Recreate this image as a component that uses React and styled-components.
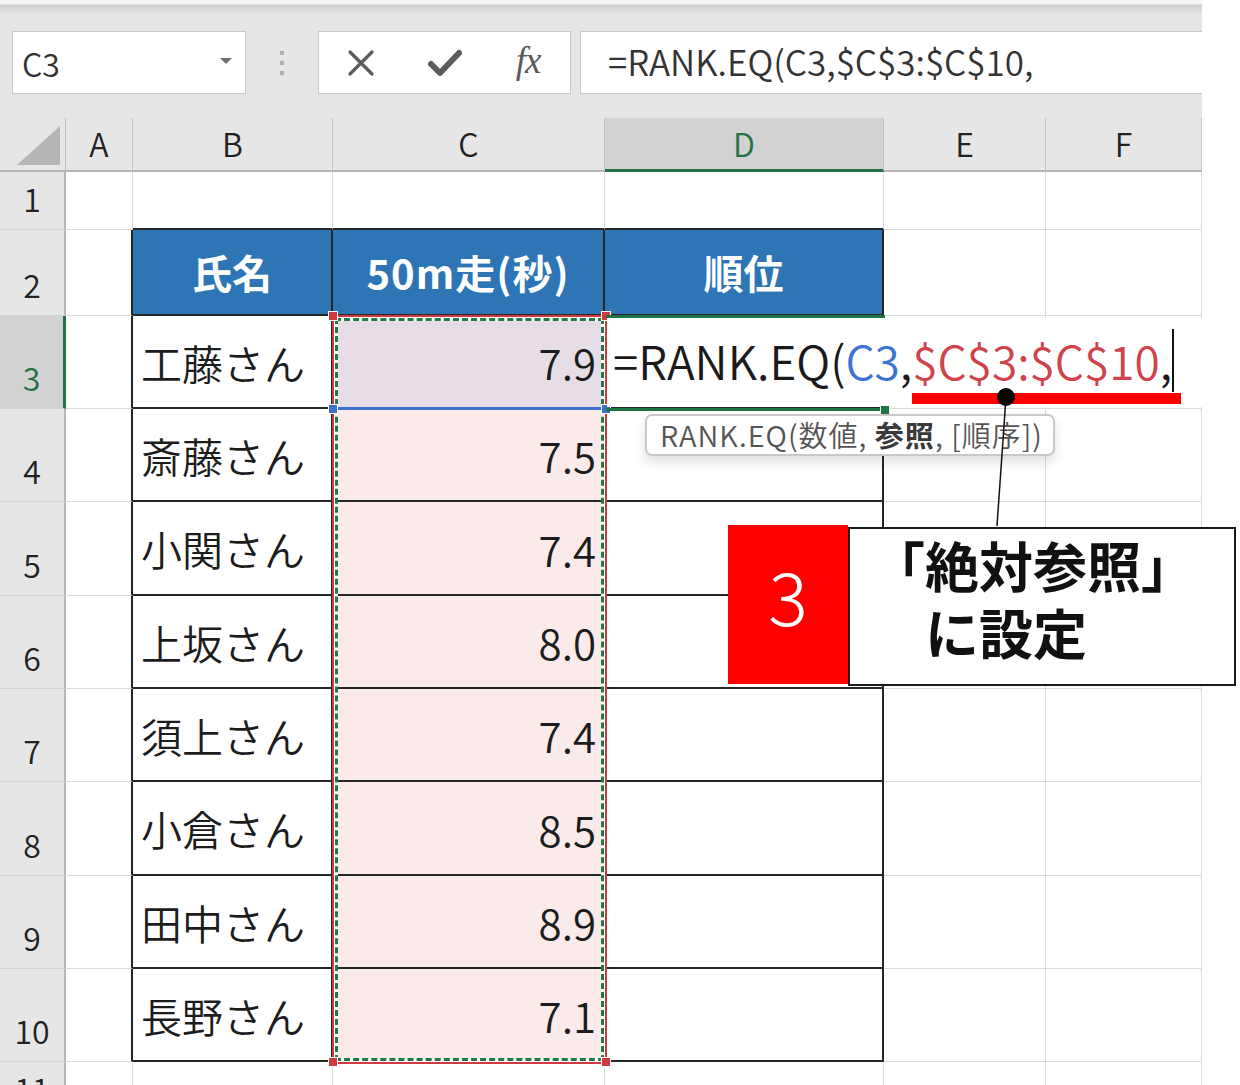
import React from 'react';
import styled, { createGlobalStyle } from 'styled-components';

const Global = createGlobalStyle`
  html, body { margin: 0; padding: 0; background: #fff; }
  body { font-family: "Noto Sans CJK JP", "Noto Sans", sans-serif; }
`;

const GREEN = '#217346';
const BLACK_LINE = '2px solid #262626';
const GRID_LINE = '1px solid #dadada';

const Root = styled.div`
  position: relative;
  width: 1240px;
  height: 1085px;
  overflow: hidden;
  background: #fff;
`;

const Frame = styled.div`
  width: 1202px;
`;

const Toolbar = styled.div`
  height: 118px;
  box-sizing: border-box;
  display: flex;
  align-items: flex-start;
  padding: 31px 0 0 12px;
  background: linear-gradient(#f6f6f6 0, #f6f6f6 4px, #cfcfcf 5px, #e3e3e3 13px, #e6e6e6 18px, #e6e6e6 100%);
`;

const NameBox = styled.div`
  width: 234px;
  height: 63px;
  box-sizing: border-box;
  background: #fff;
  border: 1px solid #c9c9c9;
  display: flex;
  align-items: center;
  justify-content: space-between;
  padding: 0 13px 0 9px;
  font-size: 32px;
  font-weight: 350;
  color: #333;
`;

const Caret = styled.span`
  width: 0;
  height: 0;
  border-left: 6px solid transparent;
  border-right: 6px solid transparent;
  border-top: 6px solid #707070;
  margin-bottom: 4px;
`;

const Grip = styled.div`
  width: 72px;
  height: 63px;
  display: flex;
  flex-direction: column;
  align-items: center;
  justify-content: center;
  gap: 6px;
`;

const GripDot = styled.span`
  width: 4px;
  height: 4px;
  background: #b0b0b0;
`;

const Buttons = styled.div`
  width: 253px;
  height: 63px;
  box-sizing: border-box;
  background: #fff;
  border: 1px solid #c9c9c9;
  display: flex;
  align-items: center;
`;

const IconSlot = styled.div`
  width: 84px;
  height: 100%;
  display: flex;
  align-items: center;
  justify-content: center;
  color: #5a5a5a;
`;

const Fx = styled.span`
  font-family: "Liberation Serif", "DejaVu Serif", serif;
  font-style: italic;
  font-size: 37px;
  color: #5a5a5a;
  letter-spacing: -1px;
  margin-bottom: 4px;
`;

const FormulaBox = styled.div`
  flex: 1;
  margin-left: 9px;
  height: 63px;
  box-sizing: border-box;
  background: #fff;
  border: 1px solid #c9c9c9;
  border-right: none;
  display: flex;
  align-items: center;
  padding: 0 0 4px 27px;
  font-size: 35px;
  font-weight: 350;
  color: #333;
  white-space: nowrap;
`;

const Grid = styled.div`
  display: grid;
  grid-template-columns: 66px 67px 200px 272px 279px 162px 156px;
  grid-template-rows: 54px 58px 86px 93px 93px 94px 93px 93px 94px 93px 93px 58px;
`;

const Corner = styled.div`
  background: #e6e6e6;
  border-right: 1px solid #bdbdbd;
  border-bottom: 2px solid #b4b4b4;
  box-sizing: border-box;
  display: flex;
  align-items: flex-end;
  justify-content: flex-end;
  padding: 0 5px 5px 0;
`;

const ColHead = styled.div`
  box-sizing: border-box;
  background: ${p => (p.$active ? '#d2d2d2' : '#e6e6e6')};
  border-right: 1px solid #c4c4c4;
  border-bottom: ${p => (p.$active ? `3px solid ${GREEN}` : '2px solid #b4b4b4')};
  display: flex;
  align-items: center;
  justify-content: center;
  font-size: 32px;
  font-weight: 350;
  color: ${p => (p.$active ? GREEN : '#222')};
  padding-bottom: 2px;
`;

const RowHead = styled.div`
  box-sizing: border-box;
  background: ${p => (p.$active ? '#d2d2d2' : '#e6e6e6')};
  border-right: ${p => (p.$active ? `3px solid ${GREEN}` : '2px solid #b8b8b8')};
  border-bottom: 1px solid #d4d4d4;
  display: flex;
  align-items: flex-end;
  justify-content: center;
  font-size: 32px;
  font-weight: 350;
  line-height: 1;
  padding-bottom: 15px;
  color: ${p => (p.$active ? GREEN : '#222')};
`;

const Cell = styled.div`
  box-sizing: border-box;
  display: flex;
  align-items: center;
  justify-content: ${p => (p.$align === 'right' ? 'flex-end' : p.$align === 'center' ? 'center' : 'flex-start')};
  padding: ${p => (p.$align === 'right' ? '0 7px 0 0' : p.$align === 'center' ? '0' : '0 0 0 8px')};
  background: ${p => p.$bg || '#fff'};
  border-right: ${p => p.$r || GRID_LINE};
  border-bottom: ${p => p.$b || GRID_LINE};
  color: ${p => p.$color || '#1c1c1c'};
  font-size: ${p => p.$size || 41}px;
  font-weight: ${p => (p.$bold ? 700 : 350)};
  letter-spacing: ${p => p.$ls || 0}px;
  white-space: nowrap;
  overflow: hidden;
`;

/* overlays */
const RangeBox = styled.div`
  position: absolute;
  left: 332px;
  top: 315px;
  width: 275px;
  height: 749px;
  box-sizing: border-box;
  border: 2px solid #cf3a3f;
  box-shadow: inset 0 0 0 4px #fff;
  pointer-events: none;
`;

const Ants = styled.div`
  position: absolute;
  inset: 1px;
  border: 3px dashed #1f7a46;
`;

const Handle = styled.span`
  position: absolute;
  width: 8px;
  height: 8px;
  background: ${p => p.$color};
  border: 1px solid #fff;
  left: ${p => p.$x - 5}px;
  top: ${p => p.$y - 5}px;
`;

const RefLine = styled.div`
  position: absolute;
  left: 334px;
  top: 407px;
  width: 271px;
  height: 3px;
  background: #3d6fcc;
`;

const Editor = styled.div`
  position: absolute;
  left: 607px;
  top: 318px;
  width: 595px;
  height: 89px;
  background: #fff;
  display: flex;
  align-items: center;
  padding: 0 0 6px 6px;
  box-sizing: border-box;
  font-size: 46px;
  font-weight: 350;
  color: #1a1a1a;
  white-space: nowrap;
`;

const Tok = styled.span`
  color: ${p => p.$color || '#1a1a1a'};
`;

const CaretLine = styled.span`
  position: absolute;
  left: 1172px;
  top: 329px;
  width: 2px;
  height: 63px;
  background: #111;
`;

const ActiveFrame = styled.div`
  position: absolute;
  left: 606px;
  top: 315px;
  width: 279px;
  height: 96px;
  box-sizing: border-box;
  border-top: 3px solid ${GREEN};
  border-bottom: 3px solid ${GREEN};
  pointer-events: none;
`;

const RedBar = styled.div`
  position: absolute;
  left: 912px;
  top: 393px;
  width: 269px;
  height: 11px;
  background: #ff0000;
`;

const Leader = styled.svg`
  position: absolute;
  left: 990px;
  top: 385px;
  overflow: visible;
`;

const Tip = styled.div`
  position: absolute;
  left: 645px;
  top: 414px;
  width: 410px;
  height: 42px;
  box-sizing: border-box;
  background: #fff;
  border: 2px solid #c9c9c9;
  border-radius: 7px;
  box-shadow: 0 6px 12px rgba(0, 0, 0, 0.13);
  display: flex;
  align-items: center;
  padding: 0 0 3px 13px;
  font-size: 29px;
  font-weight: 350;
  letter-spacing: 1px;
  color: #555;
  white-space: pre;
`;

const TipBold = styled.b`
  font-weight: 700;
  color: #3a3a3a;
`;

const StepBadge = styled.div`
  position: absolute;
  left: 728px;
  top: 525px;
  width: 120px;
  height: 159px;
  background: #ff0000;
  color: #fff;
  display: flex;
  align-items: center;
  justify-content: center;
  font-size: 74px;
  font-weight: 300;
  padding-bottom: 22px;
  box-sizing: border-box;
`;

const Note = styled.div`
  position: absolute;
  left: 848px;
  top: 527px;
  width: 388px;
  height: 159px;
  box-sizing: border-box;
  background: #fff;
  border: 2px solid #1a1a1a;
  padding: 2px 0 0 21px;
  display: flex;
  flex-direction: column;
`;

const NoteLine = styled.div`
  font-size: 54px;
  font-weight: 700;
  line-height: 67px;
  color: #111;
  white-space: nowrap;
  padding-left: ${p => (p.$indent ? '54px' : '0')};
`;

const cols = ['A', 'B', 'C', 'D', 'E', 'F'];
const people = [
  ['工藤さん', '7.9'],
  ['斎藤さん', '7.5'],
  ['小関さん', '7.4'],
  ['上坂さん', '8.0'],
  ['須上さん', '7.4'],
  ['小倉さん', '8.5'],
  ['田中さん', '8.9'],
  ['長野さん', '7.1'],
];

function rowCells(r) {
  const cells = [];
  const inTable = r >= 2 && r <= 10;
  cells.push(<Cell key="A" $r={inTable ? BLACK_LINE : GRID_LINE} />);
  if (r === 1) {
    cells.push(<Cell key="B" $b={BLACK_LINE} />);
    cells.push(<Cell key="C" $b={BLACK_LINE} />);
    cells.push(<Cell key="D" $b={BLACK_LINE} />);
  } else if (r === 2) {
    const head = { $bg: '#2e75b6', $color: '#fff', $bold: true, $size: 40, $align: 'center', $r: BLACK_LINE, $b: BLACK_LINE };
    cells.push(<Cell key="B" {...head}>氏名</Cell>);
    cells.push(<Cell key="C" {...head} $ls={1}>50m走(秒)</Cell>);
    cells.push(<Cell key="D" {...head}>順位</Cell>);
  } else if (inTable) {
    const [name, time] = people[r - 3];
    cells.push(<Cell key="B" $r={BLACK_LINE} $b={BLACK_LINE}>{name}</Cell>);
    cells.push(
      <Cell key="C" $align="right" $size={42} $bg={r === 3 ? '#e7dde7' : '#fbeaea'} $r={BLACK_LINE} $b={BLACK_LINE}>
        {time}
      </Cell>
    );
    cells.push(<Cell key="D" $r={BLACK_LINE} $b={BLACK_LINE} />);
  } else {
    cells.push(<Cell key="B" />);
    cells.push(<Cell key="C" />);
    cells.push(<Cell key="D" />);
  }
  cells.push(<Cell key="E" />);
  cells.push(<Cell key="F" />);
  return cells;
}

export default function App() {
  const rows = Array.from({ length: 11 }, (_, i) => i + 1);
  return (
    <Root>
      <Global />
      <Frame>
        <Toolbar>
          <NameBox>
            <span>C3</span>
            <Caret />
          </NameBox>
          <Grip>
            <GripDot />
            <GripDot />
            <GripDot />
          </Grip>
          <Buttons>
            <IconSlot>
              <svg width="30" height="30" viewBox="0 0 30 30">
                <path d="M4 4 L26 26 M26 4 L4 26" stroke="#5c5c5c" strokeWidth="3.2" strokeLinecap="round" />
              </svg>
            </IconSlot>
            <IconSlot>
              <svg width="34" height="30" viewBox="0 0 34 30">
                <path d="M3 16 L12 25 L31 5" stroke="#5c5c5c" strokeWidth="6" fill="none" strokeLinejoin="round" strokeLinecap="round" />
              </svg>
            </IconSlot>
            <IconSlot>
              <Fx>fx</Fx>
            </IconSlot>
          </Buttons>
          <FormulaBox>=RANK.EQ(C3,$C$3:$C$10,</FormulaBox>
        </Toolbar>
        <Grid>
          <Corner>
            <svg width="43" height="39" viewBox="0 0 43 39">
              <polygon points="43,0 43,39 0,39" fill="#b5b5b5" />
            </svg>
          </Corner>
          {cols.map(c => (
            <ColHead key={c} $active={c === 'D'}>{c}</ColHead>
          ))}
          {rows.map(r => (
            <React.Fragment key={r}>
              <RowHead $active={r === 3}>{r}</RowHead>
              {rowCells(r)}
            </React.Fragment>
          ))}
        </Grid>
      </Frame>

      <RangeBox>
        <Ants />
      </RangeBox>
      <RefLine />
      <Handle $color="#cf3a3f" $x={333} $y={316} />
      <Handle $color="#cf3a3f" $x={606} $y={316} />
      <Handle $color="#cf3a3f" $x={333} $y={1062} />
      <Handle $color="#cf3a3f" $x={606} $y={1062} />
      <Handle $color="#3d6fcc" $x={333} $y={409} />
      <Handle $color="#3d6fcc" $x={606} $y={409} />

      <Editor>
        <Tok>=RANK.EQ(</Tok>
        <Tok $color="#3c74d4">C3</Tok>
        <Tok>,</Tok>
        <Tok $color="#d0434a">$C$3:$C$10</Tok>
        <Tok>,</Tok>
      </Editor>
      <CaretLine />
      <ActiveFrame />
      <Handle $color={GREEN} $x={885} $y={410} />

      <RedBar />
      <Tip>
        {'RANK.EQ(数値, '}<TipBold>参照</TipBold>{', [順序])'}
      </Tip>
      <Leader width="30" height="150" viewBox="0 0 30 150">
        <line x1="16" y1="12" x2="7" y2="141" stroke="#111" strokeWidth="1.5" />
        <circle cx="16" cy="12" r="9" fill="#000" />
      </Leader>

      <StepBadge>3</StepBadge>
      <Note>
        <NoteLine>「絶対参照」</NoteLine>
        <NoteLine $indent>に設定</NoteLine>
      </Note>
    </Root>
  );
}
